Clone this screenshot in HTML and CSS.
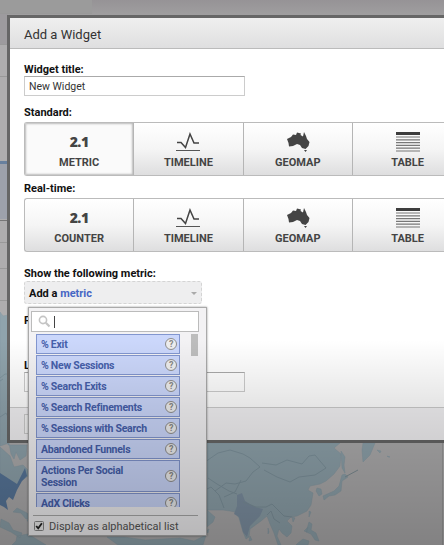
FILE: index.html
```html
<!DOCTYPE html>
<html lang="en">
<head>
  <meta charset="UTF-8">
  <meta name="viewport" content="width=device-width, initial-scale=1.0">
  <title>Add a Widget</title>
  <link rel="stylesheet" href="styles.css">
</head>
<body>
  <!-- dashboard behind the dialog -->
  <svg class="backdrop" width="444" height="545" viewBox="0 0 444 545">
    <defs>
      <linearGradient id="topShade" x1="0" y1="0" x2="0" y2="1">
        <stop offset="0" stop-color="#969396"/>
        <stop offset="1" stop-color="#a09fa0"/>
      </linearGradient>
    </defs>
    <rect width="444" height="545" fill="#aeadae"/>
    <rect width="444" height="16" fill="url(#topShade)"/>
    <rect width="92" height="13" fill="#9b9b9b"/>
    <rect y="14" width="8" height="30" fill="#9d9b9e"/>
    <path d="M0 13.500H92M0 44.500H8M0 76.500H8M0 242.500H8M0 268.500H8M0 300.500H8" stroke="#999"/>
    <rect y="163" width="8" height="56" fill="#9da1ab"/>
    <rect y="161" width="8" height="3" fill="#68809e"/>
    <path d="M0 220.500H8" stroke="#777"/>
    <g class="land">
      <path d="M0 312L3 316L8 315V445H27L26 456L20 460L16 452L14 459L11 454L9 443L0 446Z"/>
      <path d="M0 447L10 456L14 467L23 465L28 470V476L17 484L6 481H0Z"/>
      <path d="M17 508L27 513L31 518L26 519L21 513L13 512ZM29 517L36 519L34 522L27 521ZM1 519L9 523L13 530L22 533L20 538L11 532L0 527ZM17 536L28 534L46 545H12L16 541Z"/>
      <path d="M200 443H340L334 448L341 454L340 466L334 474L326 481L320 484L310 486L308 490L313 493L311 505L307 511L297 516L291 517L287 521L292 526L291 533L287 537L282 533L279 529L277 536L281 545H278L274 533L270 524L267 516L261 521L250 529L249 537L246 539L243 532L239 518L235 512L230 511L223 510H207L215 517L213 522L203 530L200 531Z"/>
      <path d="M363 443H375L370 455L363 462L362 450ZM341 451L345 457L344 465L345 473L342 468ZM342 475L345 474L348 477L342 481L341 491L335 495L329 496L324 500L323 496L334 491L339 486ZM317 488L321 489L322 494L319 496L316 491ZM309 511L311 512L309 517ZM309 522L312 524L311 530L316 533L319 541L315 540L311 534L306 532ZM292 517L295 518L293 522ZM304 531L308 527L307 532ZM298 543L303 539L309 541L308 545H296ZM250 536L252 540L249 541ZM268 528L269 532L268 534ZM377 450L381 451L380 453ZM387 456L390 457L388 457Z"/>
      <path d="M107 537L124 537L145 540L180 538L194 541L206 535L203 545H118ZM206 531L209 529L208 533Z"/>
    </g>
    <path class="land-strong" d="M0 473L17 484L25 468L27 476L22 481L17 490L13 500L9 497L6 501L8 510L4 507L0 505Z"/>
    <path class="land-mid" d="M237 495L242 493L245 501L255 507L263 509L260 516L250 526L247 537L243 532L239 517L234 514L237 506Z"/>
    <path class="borders" d="M0 378L5 374L8 374M0 381L3 379M0 417L6 413L8 417M205 462L218 453L230 450L243 454L250 458L260 467L253 472L246 481L235 484L226 483L215 491M262 463L276 465L287 460L302 464L309 456L315 455L320 461L326 468L315 475L299 477L290 482L277 477L264 470M208 478L217 484L229 491L237 494M203 491L211 487L219 495L224 508M224 497L235 492L241 480M243 502L256 507L266 507L272 504L278 510L284 516L292 517M267 515L271 511L274 519L280 523"/>
    <path d="M345 477L358 470" stroke="#7d8c93"/>
    <path d="M442.500 443V545" stroke="#999"/>
  </svg>

  <svg class="symbols" width="0" height="0">
    <symbol id="timeline" viewBox="0 0 24 20">
      <path d="M1 10.500H5L9.500 15.500L14 2L18 11H23" fill="none" stroke="#444" stroke-width="1.500"/>
      <path d="M0 18.500H24" stroke="#555" stroke-width="1"/>
    </symbol>
    <symbol id="geomap" viewBox="0 0 24 20">
      <path d="M1 7L5 5L7 2.500L10 3L11 .500L15 1.500L14.500 3L17 4.500L18 0L20 4L21 7L23.500 10L22.500 14L19.500 17L16 16L14 13L11 12L7 14L3 14.500L2.500 11ZM18 18H21L19.500 20Z" fill="#444"/>
    </symbol>
    <symbol id="table" viewBox="0 0 24 20">
      <path d="M0 1.500H24" stroke="#3d3d3d" stroke-width="3"/>
      <path d="M0 5H24M0 7.800H24M0 10.600H24M0 13.400H24M0 16.200H24M0 19H24" stroke="#777" stroke-width="1.200"/>
    </symbol>
  </svg>

  <div class="dialog">
    <div class="dialog-header">Add a Widget</div>
    <div class="dialog-body">
      <label class="label" for="title">Widget title:</label>
      <input class="text-input" type="text" id="title" value="New Widget">

      <div class="label label-standard">Standard:</div>
      <div class="types">
        <div class="type selected"><b class="number">2.1</b><span>METRIC</span></div>
        <div class="type"><svg class="icon"><use href="#timeline"/></svg><span>TIMELINE</span></div>
        <div class="type"><svg class="icon"><use href="#geomap"/></svg><span>GEOMAP</span></div>
        <div class="type"><svg class="icon"><use href="#table"/></svg><span>TABLE</span></div>
      </div>

      <div class="label label-realtime">Real-time:</div>
      <div class="types">
        <div class="type"><b class="number">2.1</b><span>COUNTER</span></div>
        <div class="type"><svg class="icon"><use href="#timeline"/></svg><span>TIMELINE</span></div>
        <div class="type"><svg class="icon"><use href="#geomap"/></svg><span>GEOMAP</span></div>
        <div class="type"><svg class="icon"><use href="#table"/></svg><span>TABLE</span></div>
      </div>

      <div class="label label-metric">Show the following metric:</div>
      <div class="metric-select">
        <span>Add a <a class="link">metric</a></span>
        <i class="caret"></i>
      </div>

      <div class="label label-filter">F</div>
      <div class="label label-link">L</div>
      <input class="text-input" type="text">
    </div>
    <div class="dialog-footer"><button class="save"></button></div>
  </div>

  <!-- metric picker -->
  <div class="picker">
    <div class="search">
      <svg width="13" height="13" viewBox="0 0 13 13" fill="none" stroke="#c4c4c4">
        <circle cx="5" cy="5" r="3.600" stroke-width="1.600"/>
        <path d="M7.800 7.800L11.500 11.500" stroke-width="2.200"/>
      </svg>
      <i class="cursor"></i>
    </div>
    <div class="list">
      <div class="items">
        <div class="item"><span>% Exit</span><i class="help">?</i></div>
        <div class="item"><span>% New Sessions</span><i class="help">?</i></div>
        <div class="item"><span>% Search Exits</span><i class="help">?</i></div>
        <div class="item"><span>% Search Refinements</span><i class="help">?</i></div>
        <div class="item"><span>% Sessions with Search</span><i class="help">?</i></div>
        <div class="item"><span>Abandoned Funnels</span><i class="help">?</i></div>
        <div class="item tall"><span>Actions Per Social<br>Session</span><i class="help">?</i></div>
        <div class="item"><span>AdX Clicks</span><i class="help">?</i></div>
      </div>
      <div class="scroll-thumb"></div>
    </div>
    <div class="picker-footer">
      <svg class="check" width="10" height="10" viewBox="0 0 10 10">
        <rect x=".500" y=".500" width="9" height="9" rx="1" fill="#eee" stroke="#888"/>
        <path d="M2.200 5L4.200 7.300L7.900 2.300" fill="none" stroke="#222" stroke-width="1.800"/>
      </svg>
      <span>Display as alphabetical list</span>
    </div>
  </div>

  <div class="shade"></div>
</body>
</html>
```

FILE: styles.css
```css
* {
  box-sizing: border-box;
}
body {
  position: relative;
  width: 444px;
  height: 545px;
  margin: 0;
  overflow: hidden;
  font-family: Roboto, "Liberation Sans", sans-serif;
  font-size: 11px;
  color: #111;
}
.backdrop {
  display: block;
}
.symbols {
  position: absolute;
}
.land {
  fill: #8fa3ac;
  stroke: #869ba4;
  stroke-width: 0.5;
}
.land-strong {
  fill: #58779b;
}
.land-mid {
  fill: #7f92a4;
}
.borders {
  fill: none;
  stroke: #7f949e;
}

/* dialog */
.dialog {
  position: absolute;
  left: 7px;
  top: 15px;
  width: 437px;
  height: 428px;
  display: flex;
  flex-direction: column;
  border: 3px solid #666;
  border-right: 0;
  background: #fff;
}
.dialog-header {
  height: 31px;
  padding-left: 14px;
  line-height: 33px;
  font-size: 13px;
  color: #333;
  background: linear-gradient(#efefef, #dfdfe0);
  border-bottom: 1px solid #bbb;
}
.dialog-body {
  flex: 1;
  padding: 13px 0 0 14px;
}
.dialog-footer {
  height: 33px;
  padding: 6px 14px;
  border-top: 1px solid #ccc;
  background: #f3f2f4;
}
.save {
  display: block;
  width: 60px;
  height: 20px;
  border: 1px solid #ccc;
  background: #f5f5f5;
}
.label {
  display: block;
  height: 14px;
  line-height: 16px;
  font-weight: bold;
}
.text-input {
  display: block;
  width: 221px;
  height: 20px;
  padding: 0 4px;
  border: 1px solid #ccc;
  border-top-color: #aaa;
  background: transparent;
  font-family: inherit;
  font-size: 10.5px;
  color: #333;
}
.label-standard {
  margin-top: 9px;
  margin-bottom: 3px;
}
.label-realtime {
  margin-top: 5px;
  margin-bottom: 3px;
}
.label-metric {
  margin-top: 14px;
}
.label-filter {
  margin-top: 9px;
}
.label-link {
  margin-top: 31px;
}

/* widget types */
.types {
  display: flex;
  height: 54px;
  overflow: hidden;
  border: 1px solid #bbb;
  border-right: 0;
  border-radius: 3px 0 0 3px;
  background: linear-gradient(#fff, #f5f5f5 50%, #dededf);
}
.type {
  flex: 0 0 109.3px;
  display: flex;
  flex-direction: column;
  align-items: center;
  padding-top: 9px;
  border-right: 1px solid #b5b5b5;
  font-weight: bold;
  line-height: 14px;
  color: #444;
}
.type:last-child {
  border-right: 0;
}
.type.selected {
  background: #fafafa;
  box-shadow: inset 0 0 2px 1px #bbb;
}
.icon,
.number {
  width: 24px;
  height: 20px;
  margin-bottom: 4px;
}
.number {
  font-family: "Open Sans", sans-serif;
  font-size: 14px;
  letter-spacing: -0.5px;
  line-height: 20px;
  text-align: center;
}

.metric-select {
  display: flex;
  align-items: center;
  justify-content: space-between;
  width: 178px;
  height: 23px;
  margin-top: 1px;
  padding: 1px 4px 0;
  border: 1px dashed #d4d4d4;
  border-radius: 3px;
  background: #eeeeef;
  font-weight: bold;
}
.link {
  color: #4766c4;
}
.caret {
  border: 3px solid transparent;
  border-top-color: #aaa;
  border-bottom: 0;
}

/* picker */
.picker {
  position: absolute;
  left: 28px;
  top: 307px;
  width: 179px;
  height: 229px;
  padding: 3px 6px 0 2px;
  border: 1px solid #aaa;
  background: #f3f2f4;
  box-shadow: 0 0 2px rgba(0, 0, 0, 0.4);
}
.search {
  display: flex;
  align-items: center;
  gap: 3px;
  width: 168px;
  height: 21px;
  padding-left: 6px;
  border: 1px solid #bbb;
  background: #fff;
}
.cursor {
  width: 1px;
  height: 12px;
  background: #444;
}
.list {
  display: flex;
  justify-content: space-between;
  height: 175px;
  padding: 2px 2px 0 5px;
  overflow: hidden;
}
.items {
  width: 144px;
}
.item {
  display: flex;
  align-items: center;
  justify-content: space-between;
  height: 20px;
  margin-bottom: 1px;
  padding: 0 2px 0 4px;
  border: 1px solid #8296cf;
  background: #cbd7fb;
  font-weight: bold;
  font-size: 10.5px;
  letter-spacing: -0.25px;
  line-height: 12px;
  color: #4660ab;
}
.item span {
  padding-top: 2px;
}
.item.tall {
  height: 32px;
}
.help {
  width: 12px;
  height: 12px;
  border: 1px solid #8d8d8d;
  border-radius: 50%;
  background: #eee;
  font-size: 9px;
  font-style: normal;
  line-height: 10px;
  text-align: center;
  color: #888;
}
.scroll-thumb {
  width: 7px;
  height: 22px;
  background: #bdbdbd;
}
.picker-footer {
  display: flex;
  align-items: center;
  gap: 5px;
  width: 165px;
  height: 21px;
  margin: 8px 0 0 2px;
  padding-left: 1px;
  border-top: 1px solid #aaa;
  font-size: 11px;
  color: #555;
}

/* darkens the lower part of the screen */
.shade {
  position: absolute;
  left: 0;
  top: 340px;
  width: 444px;
  height: 205px;
  background: linear-gradient(rgba(0, 0, 0, 0), rgba(0, 0, 0, 0.1) 32%, rgba(0, 0, 0, 0.25));
  pointer-events: none;
}
```
